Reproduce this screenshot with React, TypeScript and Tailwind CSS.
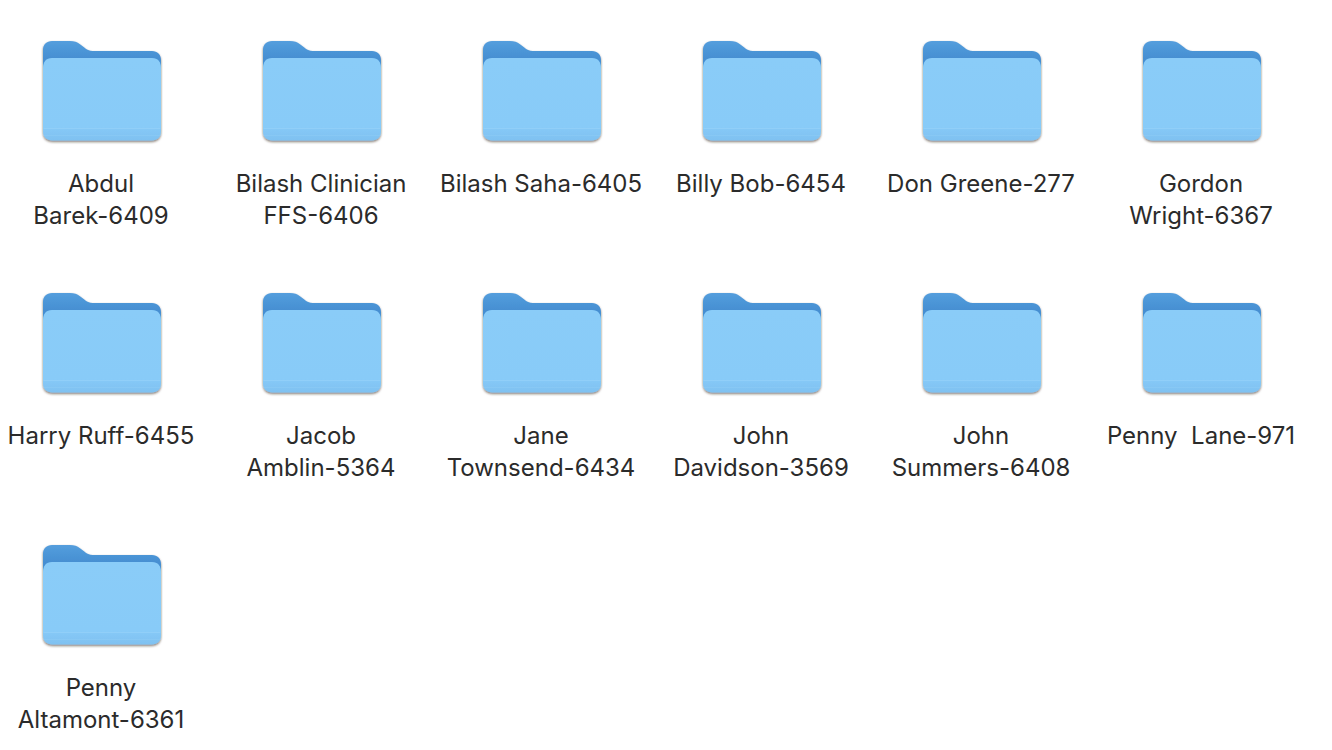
import React from 'react';

const folders = [
  ['Abdul', 'Barek-6409'],
  ['Bilash Clinician', 'FFS-6406'],
  ['Bilash Saha-6405'],
  ['Billy Bob-6454'],
  ['Don Greene-277'],
  ['Gordon', 'Wright-6367'],
  ['Harry Ruff-6455'],
  ['Jacob', 'Amblin-5364'],
  ['Jane', 'Townsend-6434'],
  ['John', 'Davidson-3569'],
  ['John', 'Summers-6408'],
  ['Penny  Lane-971'],
  ['Penny', 'Altamont-6361'],
];

function FolderIcon() {
  return (
    <svg width="130" height="112" viewBox="0 0 130 112" className="block shrink-0">
      <defs>
        <linearGradient id="folderBack" x1="0" y1="0" x2="0" y2="1">
          <stop offset="0" stopColor="#549edd" />
          <stop offset="0.2" stopColor="#468fd2" />
          <stop offset="1" stopColor="#3f86c8" />
        </linearGradient>
        <linearGradient id="folderFront" x1="0" y1="0" x2="0" y2="1">
          <stop offset="0" stopColor="#8accf8" />
          <stop offset="0.84" stopColor="#88cbf8" />
          <stop offset="0.86" stopColor="#85c8f6" />
          <stop offset="1" stopColor="#7fc1f1" />
        </linearGradient>
        <filter id="folderShadow" x="-5%" y="-5%" width="110%" height="115%">
          <feDropShadow dx="0" dy="1.4" stdDeviation="0.9" floodColor="#2a1c10" floodOpacity="0.6" />
        </filter>
        <filter id="folderSoft" x="-2%" y="-2%" width="104%" height="104%">
          <feGaussianBlur stdDeviation="0.35" />
        </filter>
      </defs>
      <g filter="url(#folderShadow)">
        <g filter="url(#folderSoft)">
          <path
            d="M7 14 C7 8.5 10.5 5 16 5 H34 C38.5 5 41 6 44 8.3 L48 11.3 C51 13.8 53 15 57 15 H116 C121.5 15 125 18.5 125 24 V90 H7 Z"
            fill="url(#folderBack)"
          />
          <path
            d="M7 32 C7 26 10 22 16 22 H116 C122 22 125 26 125 32 V95 C125 101 121.5 104.5 115.5 104.5 H16.5 C10.5 104.5 7 101 7 95 Z"
            fill="url(#folderFront)"
          />
        </g>
      </g>
      <rect x="7.5" y="92" width="117" height="1" fill="#95d2f9" opacity="0.7" />
      <rect x="7.5" y="99" width="117" height="1" fill="#8ccbf5" opacity="0.6" />
    </svg>
  );
}

export default function App() {
  return (
    <div className="h-[750px] w-[1332px] overflow-hidden bg-white">
      <div className="ml-[-9px] grid grid-cols-[repeat(6,220px)] gap-y-[56px] pt-[36px]">
        {folders.map((lines) => (
          <div key={lines.join(' ')} className="flex h-[196px] flex-col items-center">
            <FolderIcon />
            <span className="mt-[20px] whitespace-pre text-center font-['Inter',sans-serif] text-[24px] leading-[32px] text-[#2b2b2b]">
              {lines.map((line) => (
                <span key={line} className="block">
                  {line}
                </span>
              ))}
            </span>
          </div>
        ))}
      </div>
    </div>
  );
}
